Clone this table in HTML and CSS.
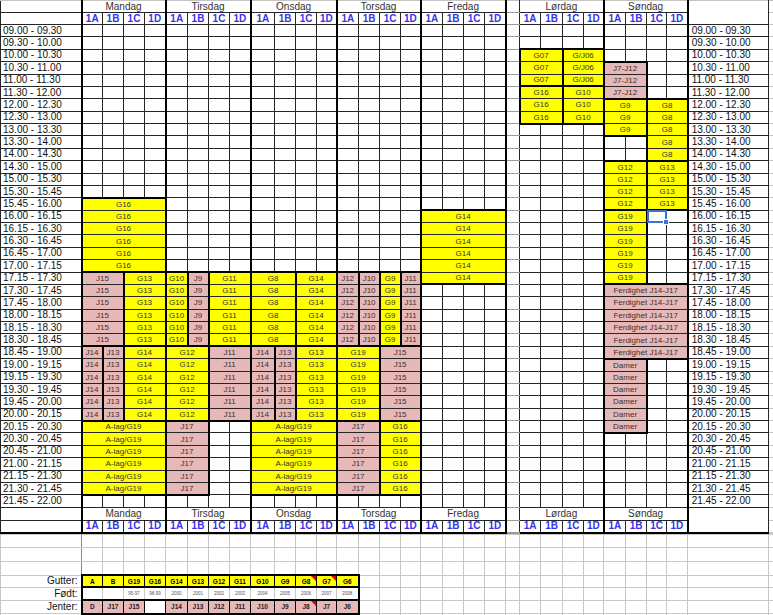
FILE: index.html
```html
<!DOCTYPE html>
<html lang="no">
<head>
<meta charset="utf-8">
<title>Treningstider</title>
<link rel="stylesheet" href="styles.css">
</head>
<body>
<table class="sheet main">
<colgroup class="cg-time"><col class="w81"></colgroup>
<colgroup class="cg-day"><col class="w21"><col class="w21"><col class="w21"><col class="w21"></colgroup>
<colgroup class="cg-day"><col class="w22"><col class="w21"><col class="w21"><col class="w21"></colgroup>
<colgroup class="cg-day"><col class="w24"><col class="w21"><col class="w21"><col class="w20"></colgroup>
<colgroup class="cg-day"><col class="w22"><col class="w21"><col class="w21"><col class="w20"></colgroup>
<colgroup class="cg-day"><col class="w22"><col class="w21"><col class="w21"><col class="w21"></colgroup>
<colgroup class="cg-gap"><col class="w14"></colgroup>
<colgroup class="cg-lor"><col class="w21"><col class="w22"><col class="w21"><col class="w20"></colgroup>
<colgroup class="cg-son"><col class="w22"><col class="w21"><col class="w20"><col class="w21"></colgroup>
<colgroup class="cg-t2"><col class="w81"></colgroup>
<colgroup class="cg-x"><col class="w5"></colgroup>
<thead>
<tr class="hd1"><th></th><th colspan="4" class="day">Mandag</th><th colspan="4" class="day">Tirsdag</th><th colspan="4" class="day">Onsdag</th><th colspan="4" class="day">Torsdag</th><th colspan="4" class="day">Fredag</th><td class="g"></td><th colspan="4" class="day">Lørdag</th><th colspan="4" class="day">Søndag</th><th rowspan="2" class="hr"></th><td class="x"></td></tr>
<tr class="hd2"><th></th><th class="sub">1A</th><th class="sub">1B</th><th class="sub">1C</th><th class="sub">1D</th><th class="sub">1A</th><th class="sub">1B</th><th class="sub">1C</th><th class="sub">1D</th><th class="sub">1A</th><th class="sub">1B</th><th class="sub">1C</th><th class="sub">1D</th><th class="sub">1A</th><th class="sub">1B</th><th class="sub">1C</th><th class="sub">1D</th><th class="sub">1A</th><th class="sub">1B</th><th class="sub">1C</th><th class="sub">1D</th><td class="g"></td><th class="sub">1A</th><th class="sub">1B</th><th class="sub">1C</th><th class="sub">1D</th><th class="sub">1A</th><th class="sub">1B</th><th class="sub">1C</th><th class="sub">1D</th><td class="x"></td></tr>
</thead>
<tbody class="data">
<tr><th class="tm">09.00 - 09.30</th><td></td><td></td><td></td><td></td><td></td><td></td><td></td><td></td><td></td><td></td><td></td><td></td><td></td><td></td><td></td><td></td><td></td><td></td><td></td><td></td><td class="g"></td><td></td><td></td><td></td><td></td><td></td><td></td><td></td><td></td><th class="tm tr">09.00 - 09.30</th><td class="x"></td></tr>
<tr><th class="tm">09.30 - 10.00</th><td></td><td></td><td></td><td></td><td></td><td></td><td></td><td></td><td></td><td></td><td></td><td></td><td></td><td></td><td></td><td></td><td></td><td></td><td></td><td></td><td class="g"></td><td></td><td></td><td></td><td></td><td></td><td></td><td></td><td></td><th class="tm tr">09.30 - 10.00</th><td class="x"></td></tr>
<tr><th class="tm">10.00 - 10.30</th><td></td><td></td><td></td><td></td><td></td><td></td><td></td><td></td><td></td><td></td><td></td><td></td><td></td><td></td><td></td><td></td><td></td><td></td><td></td><td></td><td class="g"></td><td colspan="2" class="y t">G07</td><td colspan="2" class="y t">G/J06</td><td></td><td></td><td></td><td></td><th class="tm tr">10.00 - 10.30</th><td class="x"></td></tr>
<tr><th class="tm">10.30 - 11.00</th><td></td><td></td><td></td><td></td><td></td><td></td><td></td><td></td><td></td><td></td><td></td><td></td><td></td><td></td><td></td><td></td><td></td><td></td><td></td><td></td><td class="g"></td><td colspan="2" class="y">G07</td><td colspan="2" class="y">G/J06</td><td colspan="2" class="p t">J7-J12</td><td></td><td></td><th class="tm tr">10.30 - 11.00</th><td class="x"></td></tr>
<tr><th class="tm">11.00 - 11.30</th><td></td><td></td><td></td><td></td><td></td><td></td><td></td><td></td><td></td><td></td><td></td><td></td><td></td><td></td><td></td><td></td><td></td><td></td><td></td><td></td><td class="g"></td><td colspan="2" class="y b">G07</td><td colspan="2" class="y b">G/J06</td><td colspan="2" class="p">J7-J12</td><td></td><td></td><th class="tm tr">11.00 - 11.30</th><td class="x"></td></tr>
<tr><th class="tm">11.30 - 12.00</th><td></td><td></td><td></td><td></td><td></td><td></td><td></td><td></td><td></td><td></td><td></td><td></td><td></td><td></td><td></td><td></td><td></td><td></td><td></td><td></td><td class="g"></td><td colspan="2" class="y t">G16</td><td colspan="2" class="y t">G10</td><td colspan="2" class="p b">J7-J12</td><td></td><td></td><th class="tm tr">11.30 - 12.00</th><td class="x"></td></tr>
<tr><th class="tm">12.00 - 12.30</th><td></td><td></td><td></td><td></td><td></td><td></td><td></td><td></td><td></td><td></td><td></td><td></td><td></td><td></td><td></td><td></td><td></td><td></td><td></td><td></td><td class="g"></td><td colspan="2" class="y">G16</td><td colspan="2" class="y">G10</td><td colspan="2" class="y t">G9</td><td colspan="2" class="y t">G8</td><th class="tm tr">12.00 - 12.30</th><td class="x"></td></tr>
<tr><th class="tm">12.30 - 13.00</th><td></td><td></td><td></td><td></td><td></td><td></td><td></td><td></td><td></td><td></td><td></td><td></td><td></td><td></td><td></td><td></td><td></td><td></td><td></td><td></td><td class="g"></td><td colspan="2" class="y b">G16</td><td colspan="2" class="y b">G10</td><td colspan="2" class="y">G9</td><td colspan="2" class="y">G8</td><th class="tm tr">12.30 - 13.00</th><td class="x"></td></tr>
<tr><th class="tm">13.00 - 13.30</th><td></td><td></td><td></td><td></td><td></td><td></td><td></td><td></td><td></td><td></td><td></td><td></td><td></td><td></td><td></td><td></td><td></td><td></td><td></td><td></td><td class="g"></td><td></td><td></td><td></td><td></td><td colspan="2" class="y b">G9</td><td colspan="2" class="y">G8</td><th class="tm tr">13.00 - 13.30</th><td class="x"></td></tr>
<tr><th class="tm">13.30 - 14.00</th><td></td><td></td><td></td><td></td><td></td><td></td><td></td><td></td><td></td><td></td><td></td><td></td><td></td><td></td><td></td><td></td><td></td><td></td><td></td><td></td><td class="g"></td><td></td><td></td><td></td><td></td><td></td><td></td><td colspan="2" class="y">G8</td><th class="tm tr">13.30 - 14.00</th><td class="x"></td></tr>
<tr><th class="tm">14.00 - 14.30</th><td></td><td></td><td></td><td></td><td></td><td></td><td></td><td></td><td></td><td></td><td></td><td></td><td></td><td></td><td></td><td></td><td></td><td></td><td></td><td></td><td class="g"></td><td></td><td></td><td></td><td></td><td></td><td></td><td colspan="2" class="y b">G8</td><th class="tm tr">14.00 - 14.30</th><td class="x"></td></tr>
<tr><th class="tm">14.30 - 15.00</th><td></td><td></td><td></td><td></td><td></td><td></td><td></td><td></td><td></td><td></td><td></td><td></td><td></td><td></td><td></td><td></td><td></td><td></td><td></td><td></td><td class="g"></td><td></td><td></td><td></td><td></td><td colspan="2" class="y t">G12</td><td colspan="2" class="y t">G13</td><th class="tm tr">14.30 - 15.00</th><td class="x"></td></tr>
<tr><th class="tm">15.00 - 15.30</th><td></td><td></td><td></td><td></td><td></td><td></td><td></td><td></td><td></td><td></td><td></td><td></td><td></td><td></td><td></td><td></td><td></td><td></td><td></td><td></td><td class="g"></td><td></td><td></td><td></td><td></td><td colspan="2" class="y">G12</td><td colspan="2" class="y">G13</td><th class="tm tr">15.00 - 15.30</th><td class="x"></td></tr>
<tr><th class="tm">15.30 - 15.45</th><td></td><td></td><td></td><td></td><td></td><td></td><td></td><td></td><td></td><td></td><td></td><td></td><td></td><td></td><td></td><td></td><td></td><td></td><td></td><td></td><td class="g"></td><td></td><td></td><td></td><td></td><td colspan="2" class="y">G12</td><td colspan="2" class="y">G13</td><th class="tm tr">15.30 - 15.45</th><td class="x"></td></tr>
<tr><th class="tm">15.45 - 16.00</th><td colspan="4" class="y t">G16</td><td></td><td></td><td></td><td></td><td></td><td></td><td></td><td></td><td></td><td></td><td></td><td></td><td></td><td></td><td></td><td></td><td class="g"></td><td></td><td></td><td></td><td></td><td colspan="2" class="y b">G12</td><td colspan="2" class="y b">G13</td><th class="tm tr">15.45 - 16.00</th><td class="x"></td></tr>
<tr><th class="tm">16.00 - 16.15</th><td colspan="4" class="y">G16</td><td></td><td></td><td></td><td></td><td></td><td></td><td></td><td></td><td></td><td></td><td></td><td></td><td colspan="4" class="y t">G14</td><td class="g"></td><td></td><td></td><td></td><td></td><td colspan="2" class="y t">G19</td><td class="sel"></td><td></td><th class="tm tr">16.00 - 16.15</th><td class="x"></td></tr>
<tr><th class="tm">16.15 - 16.30</th><td colspan="4" class="y">G16</td><td></td><td></td><td></td><td></td><td></td><td></td><td></td><td></td><td></td><td></td><td></td><td></td><td colspan="4" class="y">G14</td><td class="g"></td><td></td><td></td><td></td><td></td><td colspan="2" class="y">G19</td><td></td><td></td><th class="tm tr">16.15 - 16.30</th><td class="x"></td></tr>
<tr><th class="tm">16.30 - 16.45</th><td colspan="4" class="y">G16</td><td></td><td></td><td></td><td></td><td></td><td></td><td></td><td></td><td></td><td></td><td></td><td></td><td colspan="4" class="y">G14</td><td class="g"></td><td></td><td></td><td></td><td></td><td colspan="2" class="y">G19</td><td></td><td></td><th class="tm tr">16.30 - 16.45</th><td class="x"></td></tr>
<tr><th class="tm">16.45 - 17.00</th><td colspan="4" class="y">G16</td><td></td><td></td><td></td><td></td><td></td><td></td><td></td><td></td><td></td><td></td><td></td><td></td><td colspan="4" class="y">G14</td><td class="g"></td><td></td><td></td><td></td><td></td><td colspan="2" class="y">G19</td><td></td><td></td><th class="tm tr">16.45 - 17.00</th><td class="x"></td></tr>
<tr><th class="tm">17.00 - 17.15</th><td colspan="4" class="y b">G16</td><td></td><td></td><td></td><td></td><td></td><td></td><td></td><td></td><td></td><td></td><td></td><td></td><td colspan="4" class="y">G14</td><td class="g"></td><td></td><td></td><td></td><td></td><td colspan="2" class="y">G19</td><td></td><td></td><th class="tm tr">17.00 - 17.15</th><td class="x"></td></tr>
<tr><th class="tm">17.15 - 17.30</th><td colspan="2" class="p t">J15</td><td colspan="2" class="y t">G13</td><td class="y t">G10</td><td class="p t">J9</td><td colspan="2" class="y t">G11</td><td colspan="2" class="y t">G8</td><td colspan="2" class="y t">G14</td><td class="p t">J12</td><td class="p t">J10</td><td class="y t">G9</td><td class="p t">J11</td><td colspan="4" class="y b">G14</td><td class="g"></td><td></td><td></td><td></td><td></td><td colspan="2" class="y b">G19</td><td></td><td></td><th class="tm tr">17.15 - 17.30</th><td class="x"></td></tr>
<tr><th class="tm">17.30 - 17.45</th><td colspan="2" class="p">J15</td><td colspan="2" class="y">G13</td><td class="y">G10</td><td class="p">J9</td><td colspan="2" class="y">G11</td><td colspan="2" class="y">G8</td><td colspan="2" class="y">G14</td><td class="p">J12</td><td class="p">J10</td><td class="y">G9</td><td class="p">J11</td><td></td><td></td><td></td><td></td><td class="g"></td><td></td><td></td><td></td><td></td><td colspan="4" class="p t">Ferdighet J14-J17</td><th class="tm tr">17.30 - 17.45</th><td class="x"></td></tr>
<tr><th class="tm">17.45 - 18.00</th><td colspan="2" class="p">J15</td><td colspan="2" class="y">G13</td><td class="y">G10</td><td class="p">J9</td><td colspan="2" class="y">G11</td><td colspan="2" class="y">G8</td><td colspan="2" class="y">G14</td><td class="p">J12</td><td class="p">J10</td><td class="y">G9</td><td class="p">J11</td><td></td><td></td><td></td><td></td><td class="g"></td><td></td><td></td><td></td><td></td><td colspan="4" class="p">Ferdighet J14-J17</td><th class="tm tr">17.45 - 18.00</th><td class="x"></td></tr>
<tr><th class="tm">18.00 - 18.15</th><td colspan="2" class="p">J15</td><td colspan="2" class="y">G13</td><td class="y">G10</td><td class="p">J9</td><td colspan="2" class="y">G11</td><td colspan="2" class="y">G8</td><td colspan="2" class="y">G14</td><td class="p">J12</td><td class="p">J10</td><td class="y">G9</td><td class="p">J11</td><td></td><td></td><td></td><td></td><td class="g"></td><td></td><td></td><td></td><td></td><td colspan="4" class="p">Ferdighet J14-J17</td><th class="tm tr">18.00 - 18.15</th><td class="x"></td></tr>
<tr><th class="tm">18.15 - 18.30</th><td colspan="2" class="p">J15</td><td colspan="2" class="y">G13</td><td class="y">G10</td><td class="p">J9</td><td colspan="2" class="y">G11</td><td colspan="2" class="y">G8</td><td colspan="2" class="y">G14</td><td class="p">J12</td><td class="p">J10</td><td class="y">G9</td><td class="p">J11</td><td></td><td></td><td></td><td></td><td class="g"></td><td></td><td></td><td></td><td></td><td colspan="4" class="p">Ferdighet J14-J17</td><th class="tm tr">18.15 - 18.30</th><td class="x"></td></tr>
<tr><th class="tm">18.30 - 18.45</th><td colspan="2" class="p b">J15</td><td colspan="2" class="y b">G13</td><td class="y b">G10</td><td class="p b">J9</td><td colspan="2" class="y b">G11</td><td colspan="2" class="y b">G8</td><td colspan="2" class="y b">G14</td><td class="p b">J12</td><td class="p b">J10</td><td class="y b">G9</td><td class="p b">J11</td><td></td><td></td><td></td><td></td><td class="g"></td><td></td><td></td><td></td><td></td><td colspan="4" class="p">Ferdighet J14-J17</td><th class="tm tr">18.30 - 18.45</th><td class="x"></td></tr>
<tr><th class="tm">18.45 - 19.00</th><td class="p t">J14</td><td class="p t">J13</td><td colspan="2" class="y t">G14</td><td colspan="2" class="y t">G12</td><td colspan="2" class="p t">J11</td><td class="p t">J14</td><td class="p t">J13</td><td colspan="2" class="y t">G13</td><td colspan="2" class="y t">G19</td><td colspan="2" class="p t">J15</td><td></td><td></td><td></td><td></td><td class="g"></td><td></td><td></td><td></td><td></td><td colspan="4" class="p b">Ferdighet J14-J17</td><th class="tm tr">18.45 - 19.00</th><td class="x"></td></tr>
<tr><th class="tm">19.00 - 19.15</th><td class="p">J14</td><td class="p">J13</td><td colspan="2" class="y">G14</td><td colspan="2" class="y">G12</td><td colspan="2" class="p">J11</td><td class="p">J14</td><td class="p">J13</td><td colspan="2" class="y">G13</td><td colspan="2" class="y">G19</td><td colspan="2" class="p">J15</td><td></td><td></td><td></td><td></td><td class="g"></td><td></td><td></td><td></td><td></td><td colspan="2" class="p t">Damer</td><td></td><td></td><th class="tm tr">19.00 - 19.15</th><td class="x"></td></tr>
<tr><th class="tm">19.15 - 19.30</th><td class="p">J14</td><td class="p">J13</td><td colspan="2" class="y">G14</td><td colspan="2" class="y">G12</td><td colspan="2" class="p">J11</td><td class="p">J14</td><td class="p">J13</td><td colspan="2" class="y">G13</td><td colspan="2" class="y">G19</td><td colspan="2" class="p">J15</td><td></td><td></td><td></td><td></td><td class="g"></td><td></td><td></td><td></td><td></td><td colspan="2" class="p">Damer</td><td></td><td></td><th class="tm tr">19.15 - 19.30</th><td class="x"></td></tr>
<tr><th class="tm">19.30 - 19.45</th><td class="p">J14</td><td class="p">J13</td><td colspan="2" class="y">G14</td><td colspan="2" class="y">G12</td><td colspan="2" class="p">J11</td><td class="p">J14</td><td class="p">J13</td><td colspan="2" class="y">G13</td><td colspan="2" class="y">G19</td><td colspan="2" class="p">J15</td><td></td><td></td><td></td><td></td><td class="g"></td><td></td><td></td><td></td><td></td><td colspan="2" class="p">Damer</td><td></td><td></td><th class="tm tr">19.30 - 19.45</th><td class="x"></td></tr>
<tr><th class="tm">19.45 - 20.00</th><td class="p">J14</td><td class="p">J13</td><td colspan="2" class="y">G14</td><td colspan="2" class="y">G12</td><td colspan="2" class="p">J11</td><td class="p">J14</td><td class="p">J13</td><td colspan="2" class="y">G13</td><td colspan="2" class="y">G19</td><td colspan="2" class="p">J15</td><td></td><td></td><td></td><td></td><td class="g"></td><td></td><td></td><td></td><td></td><td colspan="2" class="p">Damer</td><td></td><td></td><th class="tm tr">19.45 - 20.00</th><td class="x"></td></tr>
<tr><th class="tm">20.00 - 20.15</th><td class="p b">J14</td><td class="p b">J13</td><td colspan="2" class="y b">G14</td><td colspan="2" class="y b">G12</td><td colspan="2" class="p b">J11</td><td class="p b">J14</td><td class="p b">J13</td><td colspan="2" class="y b">G13</td><td colspan="2" class="y b">G19</td><td colspan="2" class="p b">J15</td><td></td><td></td><td></td><td></td><td class="g"></td><td></td><td></td><td></td><td></td><td colspan="2" class="p">Damer</td><td></td><td></td><th class="tm tr">20.00 - 20.15</th><td class="x"></td></tr>
<tr><th class="tm">20.15 - 20.30</th><td colspan="4" class="y t">A-lag/G19</td><td colspan="2" class="p t">J17</td><td></td><td></td><td colspan="4" class="y t">A-lag/G19</td><td colspan="2" class="p t">J17</td><td colspan="2" class="y t">G16</td><td></td><td></td><td></td><td></td><td class="g"></td><td></td><td></td><td></td><td></td><td colspan="2" class="p b">Damer</td><td></td><td></td><th class="tm tr">20.15 - 20.30</th><td class="x"></td></tr>
<tr><th class="tm">20.30 - 20.45</th><td colspan="4" class="y">A-lag/G19</td><td colspan="2" class="p">J17</td><td></td><td></td><td colspan="4" class="y">A-lag/G19</td><td colspan="2" class="p">J17</td><td colspan="2" class="y">G16</td><td></td><td></td><td></td><td></td><td class="g"></td><td></td><td></td><td></td><td></td><td></td><td></td><td></td><td></td><th class="tm tr">20.30 - 20.45</th><td class="x"></td></tr>
<tr><th class="tm">20.45 - 21.00</th><td colspan="4" class="y">A-lag/G19</td><td colspan="2" class="p">J17</td><td></td><td></td><td colspan="4" class="y">A-lag/G19</td><td colspan="2" class="p">J17</td><td colspan="2" class="y">G16</td><td></td><td></td><td></td><td></td><td class="g"></td><td></td><td></td><td></td><td></td><td></td><td></td><td></td><td></td><th class="tm tr">20.45 - 21.00</th><td class="x"></td></tr>
<tr><th class="tm">21.00 - 21.15</th><td colspan="4" class="y">A-lag/G19</td><td colspan="2" class="p">J17</td><td></td><td></td><td colspan="4" class="y">A-lag/G19</td><td colspan="2" class="p">J17</td><td colspan="2" class="y">G16</td><td></td><td></td><td></td><td></td><td class="g"></td><td></td><td></td><td></td><td></td><td></td><td></td><td></td><td></td><th class="tm tr">21.00 - 21.15</th><td class="x"></td></tr>
<tr><th class="tm">21.15 - 21.30</th><td colspan="4" class="y">A-lag/G19</td><td colspan="2" class="p">J17</td><td></td><td></td><td colspan="4" class="y">A-lag/G19</td><td colspan="2" class="p">J17</td><td colspan="2" class="y">G16</td><td></td><td></td><td></td><td></td><td class="g"></td><td></td><td></td><td></td><td></td><td></td><td></td><td></td><td></td><th class="tm tr">21.15 - 21.30</th><td class="x"></td></tr>
<tr><th class="tm">21.30 - 21.45</th><td colspan="4" class="y b">A-lag/G19</td><td colspan="2" class="p b">J17</td><td></td><td></td><td colspan="4" class="y b">A-lag/G19</td><td colspan="2" class="p b">J17</td><td colspan="2" class="y b">G16</td><td></td><td></td><td></td><td></td><td class="g"></td><td></td><td></td><td></td><td></td><td></td><td></td><td></td><td></td><th class="tm tr">21.30 - 21.45</th><td class="x"></td></tr>
<tr><th class="tm">21.45 - 22.00</th><td></td><td></td><td></td><td></td><td></td><td></td><td></td><td></td><td></td><td></td><td></td><td></td><td></td><td></td><td></td><td></td><td></td><td></td><td></td><td></td><td class="g"></td><td></td><td></td><td></td><td></td><td></td><td></td><td></td><td></td><th class="tm tr">21.45 - 22.00</th><td class="x"></td></tr>
</tbody>
<tbody class="bh">
<tr class="bh1"><th></th><th colspan="4" class="day">Mandag</th><th colspan="4" class="day">Tirsdag</th><th colspan="4" class="day">Onsdag</th><th colspan="4" class="day">Torsdag</th><th colspan="4" class="day">Fredag</th><td class="g"></td><th colspan="4" class="day">Lørdag</th><th colspan="4" class="day">Søndag</th><th rowspan="2" class="hr last"></th><td class="x"></td></tr>
<tr class="bh2"><th></th><th class="sub">1A</th><th class="sub">1B</th><th class="sub">1C</th><th class="sub">1D</th><th class="sub">1A</th><th class="sub">1B</th><th class="sub">1C</th><th class="sub">1D</th><th class="sub">1A</th><th class="sub">1B</th><th class="sub">1C</th><th class="sub">1D</th><th class="sub">1A</th><th class="sub">1B</th><th class="sub">1C</th><th class="sub">1D</th><th class="sub">1A</th><th class="sub">1B</th><th class="sub">1C</th><th class="sub">1D</th><td class="g"></td><th class="sub">1A</th><th class="sub">1B</th><th class="sub">1C</th><th class="sub">1D</th><th class="sub">1A</th><th class="sub">1B</th><th class="sub">1C</th><th class="sub">1D</th><td class="x"></td></tr>
</tbody>
</table>
<table class="sheet foot">
<colgroup><col class="w81"><col class="w21"><col class="w21"><col class="w21"><col class="w21"><col class="w22"><col class="w21"><col class="w21"><col class="w21"><col class="w24"><col class="w21"><col class="w21"><col class="w20"><col class="w22"><col class="w21"><col class="w21"><col class="w20"><col class="w22"><col class="w21"><col class="w21"><col class="w21"><col class="w14"><col class="w21"><col class="w22"><col class="w21"><col class="w20"><col class="w22"><col class="w21"><col class="w20"><col class="w21"><col class="w81"><col class="w5"></colgroup>
<tbody>
<tr class="e"><td class="dk"></td><td></td><td></td><td></td><td></td><td></td><td></td><td></td><td></td><td></td><td></td><td></td><td></td><td></td><td></td><td></td><td></td><td></td><td></td><td></td><td></td><td></td><td></td><td></td><td></td><td></td><td></td><td></td><td></td><td></td><td></td><td></td></tr>
<tr class="e"><td class="dk"></td><td></td><td></td><td></td><td></td><td></td><td></td><td></td><td></td><td></td><td></td><td></td><td></td><td></td><td></td><td></td><td></td><td></td><td></td><td></td><td></td><td></td><td></td><td></td><td></td><td></td><td></td><td></td><td></td><td></td><td></td><td></td></tr>
<tr class="e"><td class="dk"></td><td></td><td></td><td></td><td></td><td></td><td></td><td></td><td></td><td></td><td></td><td></td><td></td><td></td><td></td><td></td><td></td><td></td><td></td><td></td><td></td><td></td><td></td><td></td><td></td><td></td><td></td><td></td><td></td><td></td><td></td><td></td></tr>
<tr class="gut"><th class="lbl">Gutter:</th><td class="gy gl">A</td><td class="gy">B</td><td class="gy">G19</td><td class="gy">G16</td><td class="gy">G14</td><td class="gy">G13</td><td class="gy">G12</td><td class="gy">G11</td><td class="gy">G10</td><td class="gy">G9</td><td class="gy cm">G8</td><td class="gy cm">G7</td><td class="gy gr">G6</td><td></td><td></td><td></td><td></td><td></td><td></td><td></td><td></td><td></td><td></td><td></td><td></td><td></td><td></td><td></td><td></td><td></td><td></td></tr>
<tr class="fod"><th class="lbl">Født:</th><td class="fb gl"></td><td class="fb"></td><td class="fb">95-97</td><td class="fb">98-99</td><td class="fb">2000</td><td class="fb">2001</td><td class="fb">2002</td><td class="fb">2003</td><td class="fb">2004</td><td class="fb">2005</td><td class="fb">2006</td><td class="fb">2007</td><td class="fb gr">2008</td><td></td><td></td><td></td><td></td><td></td><td></td><td></td><td></td><td></td><td></td><td></td><td></td><td></td><td></td><td></td><td></td><td></td><td></td></tr>
<tr class="jen"><th class="lbl">Jenter:</th><td class="jp gl">D</td><td class="jp">J17</td><td class="jp">J15</td><td class="jw"></td><td class="jp">J14</td><td class="jp">J13</td><td class="jp">J12</td><td class="jp">J11</td><td class="jp">J10</td><td class="jp">J9</td><td class="jp cm">J8</td><td class="jp">J7</td><td class="jp gr">J6</td><td></td><td></td><td></td><td></td><td></td><td></td><td></td><td></td><td></td><td></td><td></td><td></td><td></td><td></td><td></td><td></td><td></td><td></td></tr>
<tr class="e"><td></td><td></td><td></td><td></td><td></td><td></td><td></td><td></td><td></td><td></td><td></td><td></td><td></td><td></td><td></td><td></td><td></td><td></td><td></td><td></td><td></td><td></td><td></td><td></td><td></td><td></td><td></td><td></td><td></td><td></td><td></td><td></td></tr>
</tbody>
</table>
</body>
</html>
```

FILE: styles.css
```css
html, body {
  margin: 0;
  padding: 0;
  background: #fff;
  overflow: hidden;
}
body {
  font-family: "Liberation Sans", Arial, sans-serif;
  color: #000;
}

.w5 { width: 5px; }
.w14 { width: 14px; }
.w20 { width: 20px; }
.w21 { width: 21px; }
.w22 { width: 22px; }
.w24 { width: 24px; }
.w81 { width: 81px; }

.sheet {
  border-collapse: collapse;
  table-layout: fixed;
  width: 773px;
}
.sheet td,
.sheet th {
  padding: 0;
  font-weight: normal;
  white-space: nowrap;
  overflow: hidden;
}

/* ---------- main grid ---------- */
.main td,
.main th {
  border: 1px solid #262626;
  font-size: 8px;
  line-height: 9px;
  text-align: center;
}
.main .cg-time { border-right: 2px solid #000; }
.main .cg-day { border-left: 2px solid #000; border-right: 2px solid #000; }
.main .cg-son { border-left: 2px solid #000; border-right: 2px solid #000; }
.main .cg-lor { border-right: 2px solid #000; }

.main thead tr { height: 12px; }
.main thead tr.hd1 > * { border-top: 1px solid #c4c4c4; }
.main tbody.data tr { height: 12.39px; }
.main tr.bh1 { height: 13.4px; }
.main tr.bh2 { height: 12px; }
.main tr.bh2 > *,
.main .hr.last { border-bottom: 2px solid #000; }

.main .day {
  font-size: 10px;
  line-height: 10px;
  color: #333;
}
.main .sub {
  font-size: 10px;
  line-height: 10px;
  font-weight: bold;
  color: #3434ee;
}
.main .tm {
  font-size: 10px;
  line-height: 10px;
  text-align: left;
  padding-left: 2px;
  color: #111;
}
.main .tm.tr { padding-left: 3px; }

.main td.g {
  border-top-color: #9a9a9a;
  border-bottom-color: #9a9a9a;
}
.main td.x {
  border-top-color: #c8c8c8;
  border-bottom-color: #c8c8c8;
  border-right-color: #c8c8c8;
}

.main td.y,
.main td.p {
  border-left: 2px solid #000;
  border-right: 2px solid #000;
  color: #333;
}
.main td.y { background: #ffff00; }
.main td.p { background: #e6b8b7; color: #3d3030; }
.main td.t { border-top: 2px solid #000; }
.main td.b { border-bottom: 2px solid #000; }

.main td.sel { position: relative; overflow: visible; }
.main td.sel::before {
  content: "";
  position: absolute;
  left: -1px;
  top: -1px;
  right: -1px;
  bottom: -1px;
  border: 2px solid #3c72d8;
}
.main td.sel::after {
  content: "";
  position: absolute;
  right: -3px;
  bottom: -3px;
  width: 4px;
  height: 4px;
  background: #3c72d8;
  border: 1px solid #fff;
}

/* ---------- footer legend ---------- */
.foot td,
.foot th {
  border: 1px solid #c8c8c8;
  text-align: center;
}
.foot td.dk { border-right-color: #8a8a8a; }
.foot tr.e { height: 13.7px; }
.foot tr.gut { height: 12px; }
.foot tr.fod { height: 13px; }
.foot tr.jen { height: 13.5px; }

.foot .lbl {
  font-size: 10px;
  line-height: 10px;
  text-align: right;
  padding-right: 3px;
  color: #111;
}
.foot td.gy,
.foot td.jp,
.foot td.jw {
  border: 1px solid #000;
  border-top: 2px solid #000;
  border-bottom: 2px solid #000;
  font-size: 6.5px;
  line-height: 7px;
  font-weight: bold;
}
.foot td.gy { background: #ffff00; color: #000; }
.foot td.jp { background: #e6b8b7; color: #222; }
.foot td.fb {
  font-size: 4.5px;
  line-height: 6px;
  color: #555;
}
.foot td.gl { border-left: 2px solid #000; }
.foot td.gr { border-right: 2px solid #000; }

.foot td.cm { position: relative; overflow: visible; }
.foot td.cm::after {
  content: "";
  position: absolute;
  top: 0;
  right: 0;
  width: 0;
  height: 0;
  border-top: 5px solid #e00000;
  border-left: 5px solid transparent;
}
```
